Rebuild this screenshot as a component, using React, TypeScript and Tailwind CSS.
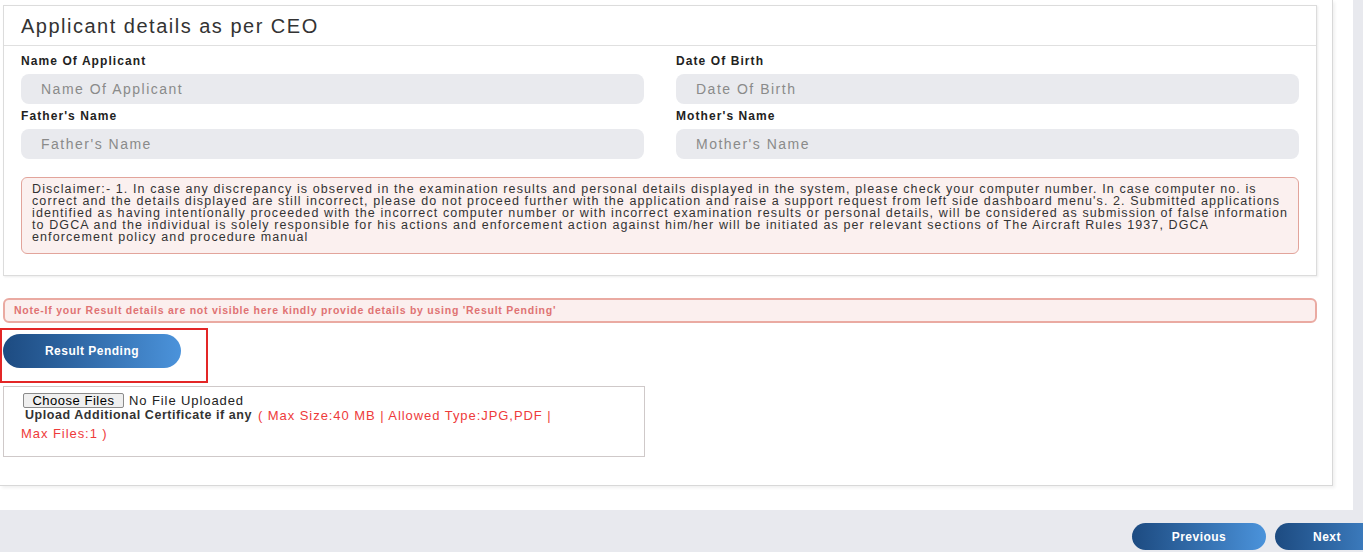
const font = { fontFamily: '"Liberation Sans", Arial, sans-serif' };

function Field({ label, placeholder }: { label: string; placeholder: string }) {
  return (
    <div className="flex flex-col">
      <label className="h-[25px] pb-[1px] flex items-center text-[12px] font-bold text-[#222] tracking-[1.08px]">{label}</label>
      <div className="h-[30px] rounded-[8px] bg-[#e9eaee] pl-5 flex items-center text-[14px] text-[#8a8a8a] tracking-[1.5px]">
        {placeholder}
      </div>
    </div>
  );
}

const disclaimer = [
  'Disclaimer:- 1. In case any discrepancy is observed in the examination results and personal details displayed in the system, please check your computer number. In case computer no. is',
  "correct and the details displayed are still incorrect, please do not proceed further with the application and raise a support request from left side dashboard menu's. 2. Submitted applications",
  'identified as having intentionally proceeded with the incorrect computer number or with incorrect examination results or personal details, will be considered as submission of false information',
  'to DGCA and the individual is solely responsible for his actions and enforcement action against him/her will be initiated as per relevant sections of The Aircraft Rules 1937, DGCA',
  'enforcement policy and procedure manual',
];

export default function App() {
  return (
    <div style={font} className="w-[1363px] h-[552px] overflow-hidden bg-[#e8e9ee] flex flex-col">
      <div className="w-[1353px] h-[510px] bg-white shrink-0">
        <div className="w-[1333px] h-[486px] border-r border-b border-[#d8d8d8] shadow-[2px_2px_3px_rgba(0,0,0,0.06)] flex flex-col">
          {/* applicant section */}
          <div className="ml-[3px] mt-[5px] w-[1314px] h-[271px] border border-[#dcdcdc] shadow-[1px_1px_2px_rgba(0,0,0,0.08)] flex flex-col">
            <div className="h-[40px] border-b border-[#e0e0e0] pl-[17px] flex items-center text-[20px] text-[#333] tracking-[1.5px]">
              Applicant details as per CEO
            </div>
            <div className="px-[17px] pt-[3px] grid grid-cols-2 gap-x-[32px]">
              <Field label="Name Of Applicant" placeholder="Name Of Applicant" />
              <Field label="Date Of Birth" placeholder="Date Of Birth" />
              <Field label="Father's Name" placeholder="Father's Name" />
              <Field label="Mother's Name" placeholder="Mother's Name" />
            </div>
            <div className="mx-[17px] mt-[18px] h-[77px] rounded-[6px] border border-[#e2a49b] bg-[#fbf0ef] pl-[10px] pt-[5px] text-[12.5px] leading-[12px] text-[#333] tracking-[1.1px]">
              {disclaimer.map((line) => (
                <div key={line} className="whitespace-nowrap">{line}</div>
              ))}
            </div>
          </div>

          {/* note */}
          <div className="ml-[3px] mt-[22px] w-[1314px] h-[25px] rounded-[6px] border-2 border-[#eaaaa2] bg-[#fbefee] pl-[9px] flex items-center text-[10.5px] font-bold text-[#e07373] tracking-[0.75px]">
            Note-If your Result details are not visible here kindly provide details by using 'Result Pending'
          </div>

          {/* result pending */}
          <div className="mt-[5px] w-[208px] h-[55px] border-2 border-[#e32626] pl-[1px] pt-[4px]">
            <button className="w-[178px] h-[34px] rounded-full bg-gradient-to-r from-[#1d4b81] to-[#4b93db] text-white text-[12px] font-bold tracking-[0.04em]">
              Result Pending
            </button>
          </div>

          {/* upload */}
          <div className="ml-[3px] mt-[3px] w-[642px] h-[71px] border border-[#cfc9c9] pl-[19px] pt-[6px] text-[13px]">
            <div className="flex items-center h-[15px]">
              <span className="h-[15px] w-[101px] border border-[#8a8a8a] rounded-[2px] bg-[#efefef] flex items-center justify-center text-[13px] text-black tracking-[0.04em]">
                Choose Files
              </span>
              <span className="ml-[5px] text-[#222] tracking-[0.07em]">No File Uploaded</span>
            </div>
            <div className="pl-[2px] h-[15px] flex items-center">
              <span className="font-bold text-[12.5px] text-[#333] tracking-[0.55px]">Upload Additional Certificate if any</span>
              <span className="ml-[6px] text-[13px] text-[#ee3b3b] tracking-[0.94px]">( Max Size:40 MB | Allowed Type:JPG,PDF |</span>
            </div>
            <div className="-ml-[2px] h-[22px] flex items-center text-[13px] text-[#ee3b3b] tracking-[0.94px]">Max Files:1 )</div>
          </div>
        </div>
      </div>

      {/* nav */}
      <div className="mt-[13px] pl-[1132px] flex gap-[9px]">
        <button className="shrink-0 w-[134px] h-[27px] rounded-full bg-gradient-to-r from-[#1d4b81] to-[#4b93db] text-white text-[12px] font-bold tracking-[0.04em]">
          Previous
        </button>
        <button className="shrink-0 w-[134px] h-[27px] rounded-full bg-gradient-to-r from-[#1d4b81] to-[#4b93db] text-white text-[12px] font-bold tracking-[0.04em] pl-[38px] text-left">
          Next
        </button>
      </div>
    </div>
  );
}
